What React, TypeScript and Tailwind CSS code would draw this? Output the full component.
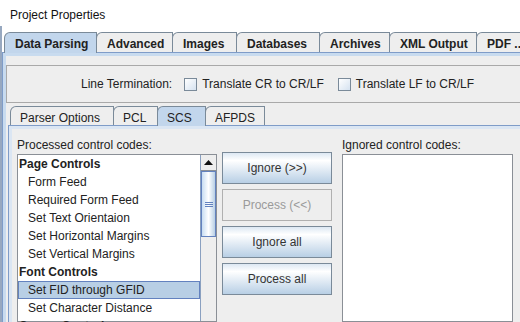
import React from "react";

const FONT = { fontFamily: '"Liberation Sans", Arial, sans-serif' };

function OuterTab({ label, w, selected }: { label: string; w: number; selected?: boolean }) {
  return (
    <div
      style={{ width: w }}
      className={
        selected
          ? "relative z-10 -mb-px h-[21px] -ml-px first:ml-0 flex items-start pt-[2px] pl-[10px] border border-b-0 border-[#7a8a99] rounded-tl-[6px] bg-[#c2d6ec] font-bold text-[#222] whitespace-nowrap overflow-hidden shrink-0"
          : "relative h-[20px] -ml-px flex items-start pt-[2px] pl-[10px] border border-b-0 border-[#7a8a99] rounded-tl-[6px] bg-[#eeeeee] font-bold text-[#222] whitespace-nowrap overflow-hidden shrink-0"
      }
    >
      {label}
    </div>
  );
}

function InnerTab({ label, w, selected }: { label: string; w: number; selected?: boolean }) {
  return (
    <div
      style={{ width: w }}
      className={
        selected
          ? "relative z-10 -mb-px h-[20px] -ml-px flex items-start pt-[2px] pl-[9px] border border-b-0 border-[#7a8a99] rounded-tl-[6px] bg-[#c2d6ec] text-[#222] whitespace-nowrap shrink-0"
          : "relative h-[19px] -ml-px first:ml-0 flex items-start pt-[2px] pl-[9px] border border-b-0 border-[#7a8a99] rounded-tl-[6px] bg-[#eeeeee] text-[#222] whitespace-nowrap shrink-0"
      }
    >
      {label}
    </div>
  );
}

function CheckBox() {
  return (
    <div className="w-[13px] h-[13px] border border-[#7a8a99] bg-linear-to-br from-white to-[#d5e2f0] shrink-0" />
  );
}

function Btn({ label, disabled }: { label: string; disabled?: boolean }) {
  return (
    <div
      className={
        disabled
          ? "h-[32px] w-[110px] border border-[#b0b0b0] bg-[#eeeeee] text-[#9a9a9a] flex items-center justify-center"
          : "h-[32px] w-[110px] border border-[#7a8a99] bg-linear-to-b from-[#dde8f3] via-white via-25% to-[#b8cfe5] text-[#333] flex items-center justify-center"
      }
    >
      {label}
    </div>
  );
}

const rows: { t: string; h?: boolean; sel?: boolean }[] = [
  { t: "Page Controls", h: true },
  { t: "Form Feed" },
  { t: "Required Form Feed" },
  { t: "Set Text Orientaion" },
  { t: "Set Horizontal Margins" },
  { t: "Set Vertical Margins" },
  { t: "Font Controls", h: true },
  { t: "Set FID through GFID", sel: true },
  { t: "Set Character Distance" },
  { t: "Cursor Controls", h: true },
];

export default function App() {
  return (
    <div
      style={FONT}
      className="w-[520px] h-[322px] overflow-hidden bg-white text-[12px] text-[#222] flex flex-col"
    >
      <div className="h-[26px] pl-[10px] pt-[8px] leading-[14px] text-[#111] shrink-0">Project Properties</div>
      <div className="flex-1 flex min-h-0">
        <div className="w-[2px] bg-[#97a8c0] shrink-0" />
        <div className="flex-1 flex flex-col min-w-0 pt-[6px]">
          {/* outer tabs */}
          <div className="flex items-end h-[20px] pl-[2px] shrink-0">
            <OuterTab label="Data Parsing" w={93} selected />
            <OuterTab label="Advanced" w={77} />
            <OuterTab label="Images" w={65} />
            <OuterTab label="Databases" w={84} />
            <OuterTab label="Archives" w={71} />
            <OuterTab label="XML Output" w={88} />
            <OuterTab label="PDF ..." w={60} />
          </div>
          {/* content border band */}
          <div className="flex-1 min-h-0 border-t border-l border-[#7f9cc8] bg-[#c8dbef] pt-[3px] pl-[3px] flex flex-col">
            <div className="flex-1 min-h-0 bg-[#eeeeee] flex flex-col">
              {/* line termination box */}
              <div className="mt-[9px] h-[38px] border-t border-b border-l border-[#a9a9a9] flex items-center pl-[74px] shrink-0">
                <span className="whitespace-nowrap">Line Termination:</span>
                <div className="ml-[12px] flex items-center gap-[5px]">
                  <CheckBox />
                  <span className="whitespace-nowrap">Translate CR to CR/LF</span>
                </div>
                <div className="ml-[14px] flex items-center gap-[5px]">
                  <CheckBox />
                  <span className="whitespace-nowrap">Translate LF to CR/LF</span>
                </div>
              </div>
              {/* inner tabbed pane */}
              <div className="mt-[2px] ml-[2px] flex-1 min-h-0 flex flex-col">
                <div className="flex items-end h-[20px] pl-[2px] shrink-0">
                  <InnerTab label="Parser Options" w={104} />
                  <InnerTab label="PCL" w={45} />
                  <InnerTab label="SCS" w={49} selected />
                  <InnerTab label="AFPDS" w={60} />
                </div>
                <div className="flex-1 min-h-0 border-t border-l border-[#7f9cc8] bg-[#dbe6f3] pt-[3px] pl-[3px] flex flex-col">
                  <div className="flex-1 min-h-0 bg-[#eeeeee] pl-[5px] pt-[10px] flex">
                    {/* left column */}
                    <div className="flex flex-col w-[200px] shrink-0">
                      <div className="h-[15px] leading-[13px] whitespace-nowrap">Processed control codes:</div>
                      <div className="flex-1 border border-[#8a8f96] bg-white flex min-h-0">
                        <div className="w-[182px] flex flex-col">
                          {rows.map((r) => (
                            <div
                              key={r.t}
                              className={
                                r.sel
                                  ? "h-[18px] shrink-0 flex items-center pl-[9px] bg-[#b8cfe5] border border-[#6382bf] text-[#222] whitespace-nowrap"
                                  : r.h
                                  ? "h-[18px] shrink-0 flex items-center pl-[1px] font-bold text-[#222] whitespace-nowrap"
                                  : "h-[18px] shrink-0 flex items-center pl-[10px] text-[#222] whitespace-nowrap"
                              }
                            >
                              {r.t}
                            </div>
                          ))}
                        </div>
                        {/* scrollbar */}
                        <div className="w-[16px] flex flex-col border-l border-[#8aa0c0] bg-[#eeeeee]">
                          <div className="h-[16px] border-b border-[#8a8f96] bg-[#eeeeee] flex items-center justify-center shrink-0">
                            <svg width="9" height="5" viewBox="0 0 9 5">
                              <polygon points="0,5 4.5,0 9,5" fill="#111" />
                            </svg>
                          </div>
                          <div className="h-[66px] border border-[#6382bf] bg-linear-to-r from-[#c8ddf2] via-white to-[#b8cfe5] flex flex-col items-center justify-center gap-[1px] shrink-0">
                            <div className="w-[8px] h-px bg-[#6382bf]" />
                            <div className="w-[8px] h-px bg-[#6382bf]" />
                            <div className="w-[8px] h-px bg-[#6382bf]" />
                          </div>
                          <div className="flex-1" />
                        </div>
                      </div>
                    </div>
                    {/* buttons */}
                    <div className="ml-[5px] pt-[13px] flex flex-col gap-[5px] shrink-0">
                      <Btn label="Ignore (>>)" />
                      <Btn label="Process (<<)" disabled />
                      <Btn label="Ignore all" />
                      <Btn label="Process all" />
                    </div>
                    {/* right column */}
                    <div className="ml-[10px] flex flex-col w-[171px] shrink-0">
                      <div className="h-[15px] leading-[13px] whitespace-nowrap">Ignored control codes:</div>
                      <div className="flex-1 border border-[#8a8f96] bg-white" />
                    </div>
                  </div>
                </div>
              </div>
            </div>
          </div>
        </div>
      </div>
    </div>
  );
}
